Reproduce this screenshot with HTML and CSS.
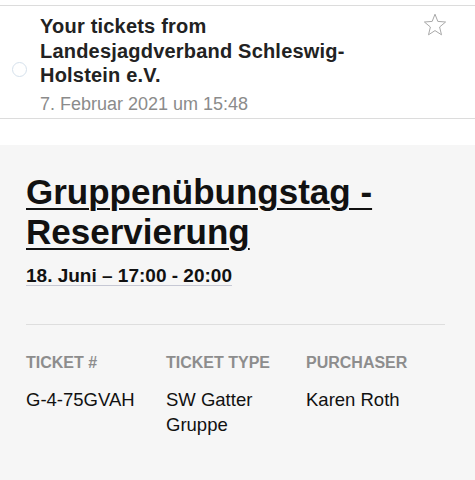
FILE: index.html
```html
<!DOCTYPE html>
<html lang="de">
<head>
<meta charset="utf-8">
<title>Your tickets</title>
<link rel="stylesheet" href="styles.css">
</head>
<body>
<div class="mail">
  <div class="mail-row">
    <div class="dot-col"><span class="dot"></span></div>
    <div class="mail-text">
      <div class="subject">Your tickets from Landesjagdverband Schleswig-Holstein e.V.</div>
      <div class="date">7. Februar 2021 um 15:48</div>
    </div>
    <div class="star-col">
      <svg class="star" width="24" height="24" viewBox="0 0 24 24"><polygon points="12,1.2 14.8,8.4 22.6,9 16.6,14 18.5,21.8 12,17.6 5.5,21.8 7.4,14 1.4,9 9.2,8.4" fill="none" stroke="#a9a9a9" stroke-width="1" stroke-linejoin="round"/></svg>
    </div>
  </div>
</div>
<div class="ticket">
  <h1 class="title">Gruppenübungstag - Reservierung</h1>
  <div class="when">18. Juni – 17:00 - 20:00</div>
  <hr class="divider">
  <div class="grid">
    <div class="label">TICKET #</div>
    <div class="label">TICKET TYPE</div>
    <div class="label">PURCHASER</div>
    <div class="value">G-4-75GVAH</div>
    <div class="value">SW Gatter Gruppe</div>
    <div class="value">Karen Roth</div>
  </div>
</div>
</body>
</html>
```
FILE: styles.css
```css
html, body {
  margin: 0;
  padding: 0;
  background: #ffffff;
  font-family: "Liberation Sans", Arial, sans-serif;
  width: 475px;
  height: 480px;
  overflow: hidden;
}

.mail {
  padding-top: 5px;
}

.mail-row {
  display: flex;
  border-top: 1px solid #dcdcdc;
  border-bottom: 1px solid #dcdcdc;
  height: 112px;
}

.dot-col {
  width: 40px;
  flex: none;
}

.dot {
  display: block;
  width: 13px;
  height: 13px;
  margin: 56px 0 0 12px;
  border: 1.5px solid #d5e1ec;
  border-radius: 50%;
}

.mail-text {
  flex: 1;
  padding-top: 8px;
}

.subject {
  max-width: 350px;
  font-size: 20px;
  line-height: 24.5px;
  font-weight: bold;
  color: #222222;
  letter-spacing: 0.2px;
}

.date {
  margin-top: 5px;
  font-size: 18px;
  line-height: 22px;
  color: #8b8b8b;
}

.star-col {
  flex: none;
  padding: 7px 28px 0 0;
}

.star {
  display: block;
}

.ticket {
  box-sizing: border-box;
  margin-top: 26px;
  background: #f6f6f6;
  padding: 27px 30px 0 26px;
  height: 335px;
}

.title {
  margin: 0;
  font-size: 35px;
  line-height: 40px;
  font-weight: bold;
  color: #111111;
  text-decoration: underline;
  text-decoration-thickness: 2px;
  text-underline-offset: 4px;
}

.when {
  display: inline-block;
  margin-top: 13px;
  font-size: 19px;
  line-height: 22px;
  font-weight: bold;
  color: #111111;
  text-decoration: underline;
  text-decoration-color: #c6c8d4;
  text-decoration-thickness: 1px;
  text-underline-offset: 3px;
}

.divider {
  margin: 37px 0 0 0;
  border: 0;
  border-top: 1px solid #dedede;
  height: 0;
}

.grid {
  display: grid;
  grid-template-columns: 140px 140px 1fr;
  row-gap: 14px;
  margin-top: 28px;
}

.label {
  font-size: 16px;
  line-height: 20px;
  font-weight: bold;
  color: #8d8d8d;
}

.value {
  font-size: 18.5px;
  line-height: 25px;
  color: #111111;
  padding-right: 8px;
}
```
